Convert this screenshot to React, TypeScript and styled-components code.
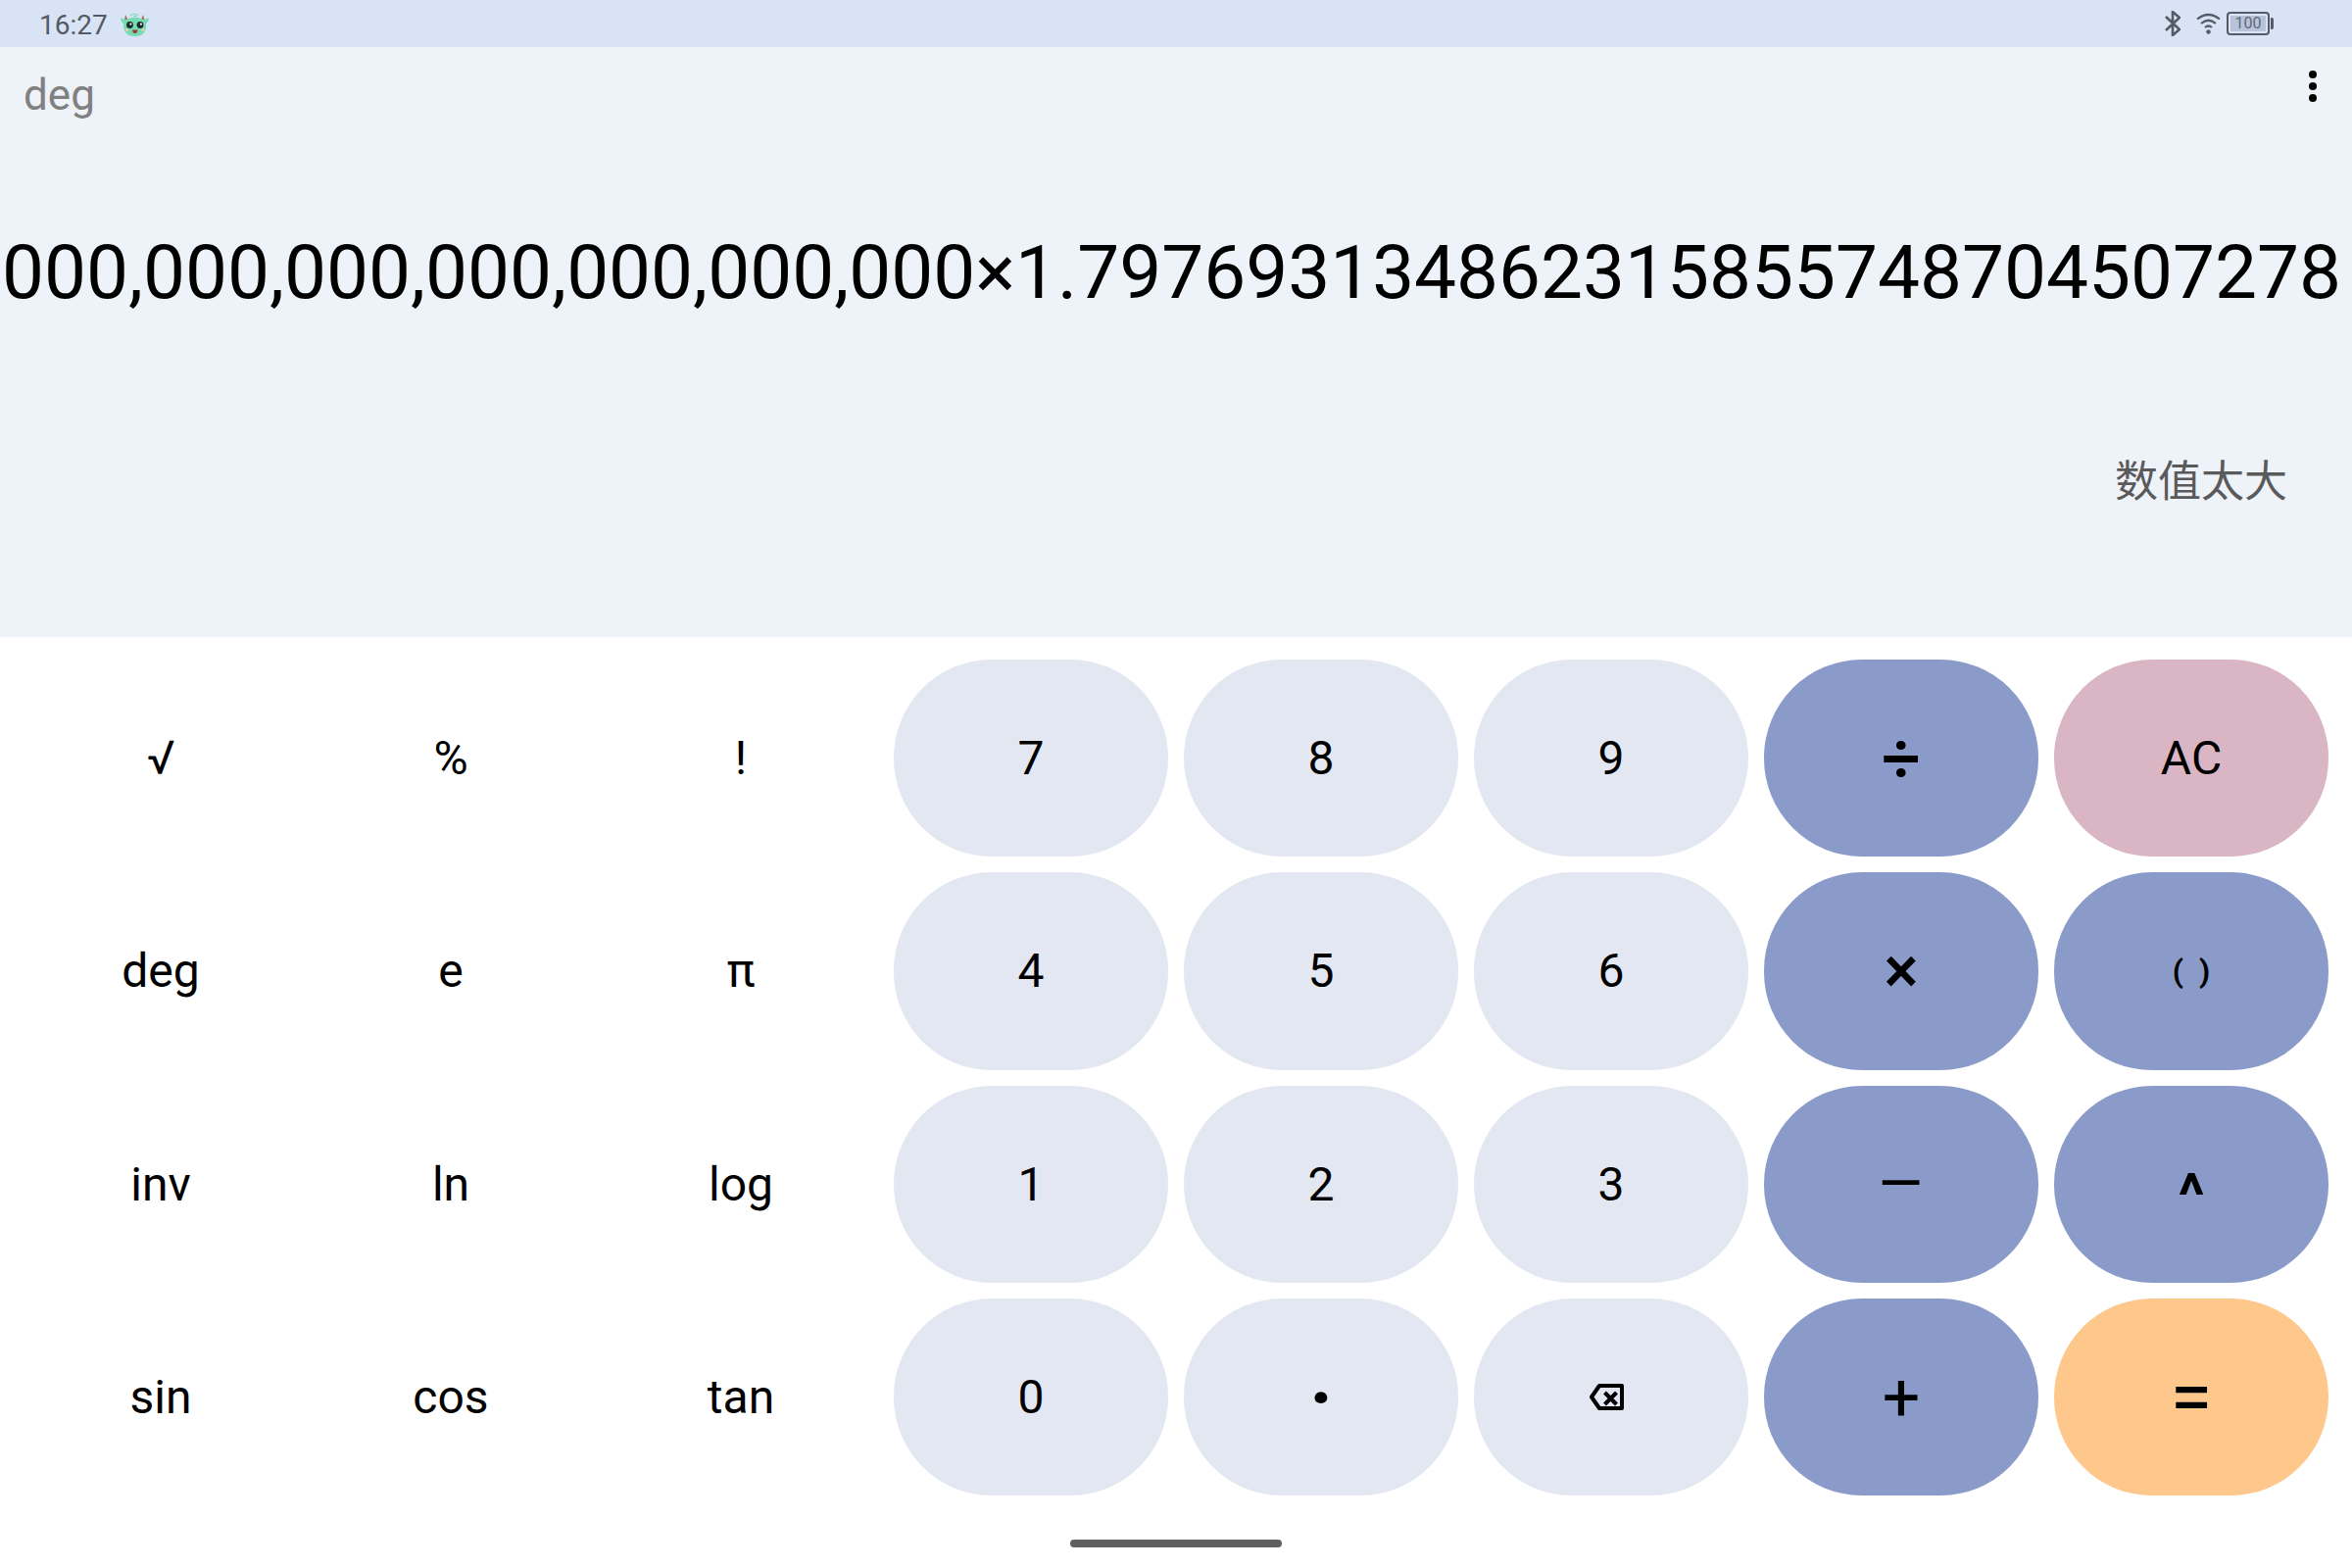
import React from "react";
import styled, { createGlobalStyle } from "styled-components";

const Global = createGlobalStyle`
  html, body { margin: 0; padding: 0; background: #fff; }
  body { font-family: Roboto, "Noto Sans CJK SC", sans-serif; }
`;

const Screen = styled.div`
  width: 2400px;
  height: 1600px;
  display: flex;
  flex-direction: column;
  overflow: hidden;
  background: #fff;
  position: relative;
`;

const StatusBar = styled.div`
  height: 48px;
  flex: none;
  background: #d8e3f6;
  display: flex;
  align-items: center;
  padding: 0 80px 0 40px;
  color: #555a64;
  font-size: 28px;
`;

const Clock = styled.span`
  margin-right: 13px;
  padding-top: 2px;
`;

const StatusIcons = styled.div`
  margin-left: auto;
  display: flex;
  align-items: center;
  gap: 6px;
`;

const Display = styled.div`
  height: 602px;
  flex: none;
  background: #eef2f9;
  position: relative;
  display: flex;
  flex-direction: column;
`;

const TopRow = styled.div`
  height: 92px;
  flex: none;
  display: flex;
  justify-content: space-between;
  padding: 23px 36px 0 24px;
  box-sizing: border-box;
`;

const Mode = styled.span`
  font-size: 44px;
  line-height: 52px;
  color: #808080;
`;

const Dots = styled.div`
  display: flex;
  flex-direction: column;
  gap: 4px;
  padding-top: 1px;
`;

const Dot = styled.i`
  display: block;
  width: 8px;
  height: 8px;
  border-radius: 50%;
  background: #000;
`;

const Expression = styled.div`
  display: flex;
  justify-content: flex-end;
  white-space: nowrap;
  overflow: hidden;
  height: 90px;
  margin-top: 93px;
  padding-right: 11px;
  font-size: 76.5px;
  line-height: 90px;
  color: #000;
`;

const Result = styled.div`
  margin-top: 135px;
  padding-right: 66px;
  text-align: right;
  font-size: 44px;
  line-height: 60px;
  color: #5a5a5a;
  font-family: "Noto Sans CJK SC", sans-serif;
`;

const Pad = styled.div`
  display: grid;
  grid-template-columns: repeat(8, 280px);
  grid-auto-rows: 201.33px;
  gap: 16px;
  padding: 23px 24px 0;
`;

type Kind = "plain" | "num" | "op" | "clear" | "eq";

const colors: Record<Kind, string> = {
  plain: "transparent",
  num: "#e3e7f1",
  op: "#8a9ac9",
  clear: "#dab5c3",
  eq: "#fec88c",
};

const Key = styled.div<{ $kind: Kind }>`
  display: flex;
  align-items: center;
  justify-content: center;
  border-radius: 100px;
  background: ${(p) => colors[p.$kind]};
  color: #000;
  font-size: 48px;
`;

const HomeBar = styled.div`
  position: absolute;
  left: 1092px;
  bottom: 21px;
  width: 216px;
  height: 8px;
  border-radius: 4px;
  background: #5f5f5f;
`;

const MascotSvg = styled.svg`
  margin-top: 2px;
`;

const Mascot = () => (
  <MascotSvg width="29" height="24" viewBox="0 0 29 24">
    <path d="M5 2 L7.5 7 L4 7 Z" fill="#a9705f" />
    <path d="M23 2 L24.5 7 L21 7 Z" fill="#a9705f" />
    <path d="M10 2.5 Q14 0 18 2.5 M13 4 Q15 2.5 17 4" stroke="#73dcb3" strokeWidth="1" fill="none" />
    <path d="M0 5.5 L6 7 Q14.5 2.5 23 7 L29 5.5 Q28 10 26 11 Q27 24 14.5 24 Q2.5 24 3 11 Q1 10 0 5.5 Z" fill="#73dcb3" />
    <circle cx="9.5" cy="12.5" r="3.4" fill="#1f2a2a" />
    <circle cx="20" cy="12.5" r="3.4" fill="#1f2a2a" />
    <circle cx="10.4" cy="11.6" r="1.1" fill="#fff" />
    <circle cx="20.9" cy="11.6" r="1.1" fill="#fff" />
    <circle cx="6.5" cy="17.5" r="1.5" fill="#f1c9a4" />
    <circle cx="23" cy="17.5" r="1.5" fill="#f1c9a4" />
    <path d="M12 17.5 H17.5 Q17 21 14.7 21 Q12.5 21 12 17.5 Z" fill="#a3372e" />
  </MascotSvg>
);

const BluetoothSvg = styled.svg`
  margin-right: 10px;
`;

const Bluetooth = () => (
  <BluetoothSvg width="16" height="26" viewBox="0 0 16 26" fill="none" stroke="#555a64" strokeWidth="2.6">
    <path d="M1 6 L15 19 L8 25 V1 L15 7 L1 20" />
  </BluetoothSvg>
);

const Wifi = () => (
  <svg width="25" height="22" viewBox="0 0 25 22" fill="none" stroke="#555a64" strokeWidth="2.2">
    <path d="M1 6.5 Q12.5 -2.5 24 6.5" />
    <path d="M5 11 Q12.5 4.5 20 11" />
    <path d="M9 15 Q12.5 12 16 15" />
    <circle cx="12.5" cy="19.5" r="2.2" fill="#555a64" stroke="none" />
  </svg>
);

const BatteryBody = styled.div`
  width: 44px;
  height: 24px;
  box-sizing: border-box;
  border: 2px solid #555a64;
  border-radius: 4px;
  padding: 2px;
  display: flex;
`;

const BatteryFill = styled.div`
  flex: 1;
  background: #b7c3da;
  color: #636876;
  font-size: 16px;
  line-height: 16px;
  text-align: center;
`;

const BatteryCap = styled.div`
  width: 3px;
  height: 12px;
  margin-left: 1px;
  background: #555a64;
  border-radius: 0 2px 2px 0;
`;

const Battery = styled.div`
  display: flex;
  align-items: center;
`;

const BackspaceSvg = styled.svg`
  margin-right: 9px;
`;

const Backspace = () => (
  <BackspaceSvg width="35" height="27" viewBox="0 0 35 27" fill="none" stroke="#000" strokeWidth="4" strokeLinejoin="round">
    <path d="M2 13.5 L10 2 H33 V25 H10 Z" />
    <path d="M15.5 9 L27.5 21 M27.5 9 L15.5 21" />
  </BackspaceSvg>
);

const Op = styled.span<{ $size?: number; $weight?: number }>`
  font-weight: ${(p) => p.$weight ?? 500};
  font-size: ${(p) => p.$size ?? 66}px;
  line-height: 1;
`;

const Minus = styled(Op)`
  display: inline-block;
  transform: scaleX(1.4);
`;

const Parens = styled(Op)`
  word-spacing: 8px;
`;

const Caret = styled(Op)`
  display: inline-block;
  transform: translateY(12px);
`;

const keys: [React.ReactNode, Kind][] = [
  ["√", "plain"], ["%", "plain"], ["!", "plain"], ["7", "num"], ["8", "num"], ["9", "num"], [<Op $size={70}>÷</Op>, "op"], ["AC", "clear"],
  ["deg", "plain"], ["e", "plain"], ["π", "plain"], ["4", "num"], ["5", "num"], ["6", "num"], [<Op>×</Op>, "op"], [<Parens $size={32} $weight={700}>( )</Parens>, "op"],
  ["inv", "plain"], ["ln", "plain"], ["log", "plain"], ["1", "num"], ["2", "num"], ["3", "num"], [<Minus $size={66} $weight={400}>−</Minus>, "op"], [<Caret $size={62} $weight={700}>^</Caret>, "op"],
  ["sin", "plain"], ["cos", "plain"], ["tan", "plain"], ["0", "num"], [<Op $size={80} $weight={700}>·</Op>, "num"], [<Backspace />, "num"], [<Op $size={68} $weight={400}>+</Op>, "op"], [<Op $size={78} $weight={400}>=</Op>, "eq"],
];

export default function App() {
  return (
    <Screen>
      <Global />
      <StatusBar>
        <Clock>16:27</Clock>
        <Mascot />
        <StatusIcons>
          <Bluetooth />
          <Wifi />
          <Battery>
            <BatteryBody>
              <BatteryFill>100</BatteryFill>
            </BatteryBody>
            <BatteryCap />
          </Battery>
        </StatusIcons>
      </StatusBar>
      <Display>
        <TopRow>
          <Mode>deg</Mode>
          <Dots>
            <Dot />
            <Dot />
            <Dot />
          </Dots>
        </TopRow>
        <Expression>
          000,000,000,000,000,000,000×1.797693134862315855748704507278
        </Expression>
        <Result>数值太大</Result>
      </Display>
      <Pad>
        {keys.map(([label, kind], i) => (
          <Key key={i} $kind={kind}>
            {label}
          </Key>
        ))}
      </Pad>
      <HomeBar />
    </Screen>
  );
}
